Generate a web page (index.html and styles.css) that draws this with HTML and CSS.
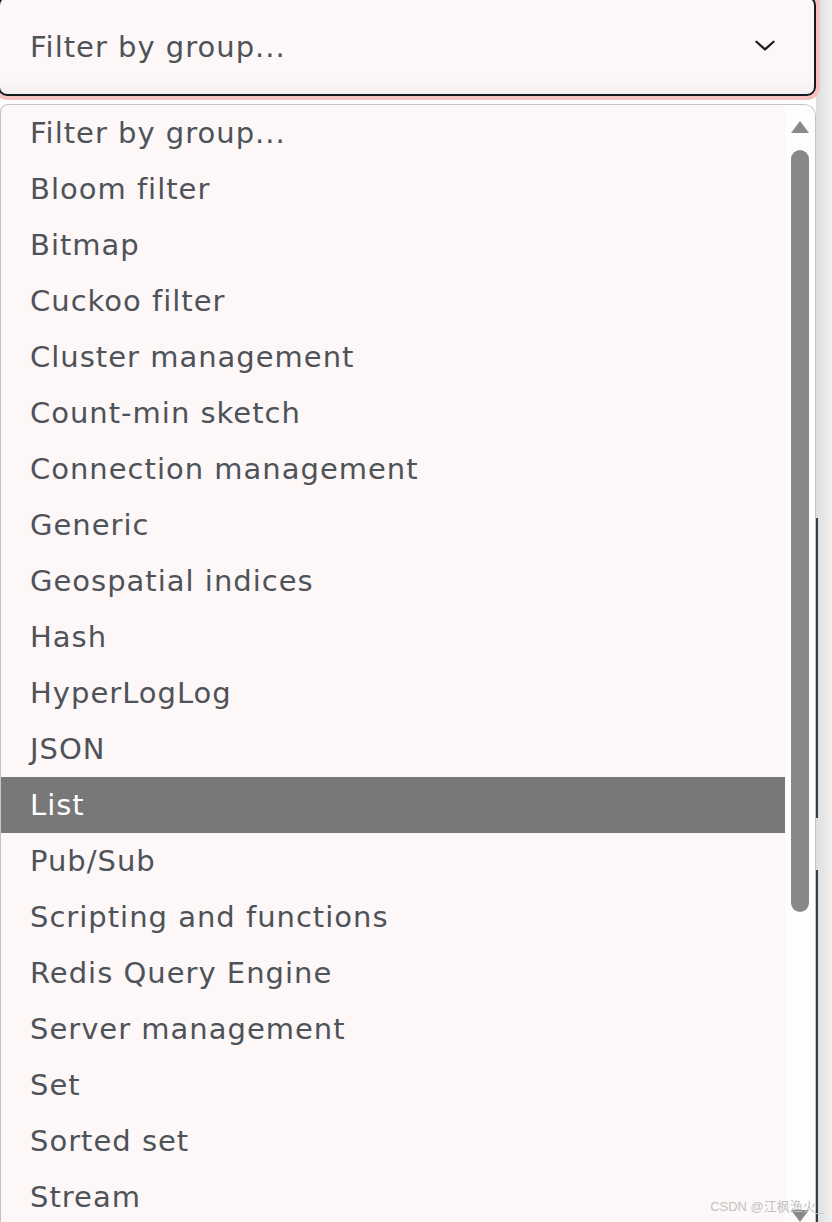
FILE: index.html
```html
<!DOCTYPE html>
<html lang="en">
<head>
  <meta charset="UTF-8">
  <meta name="viewport" content="width=device-width, initial-scale=1.0">
  <title>Filter by group</title>
  <link rel="stylesheet" href="styles.css">
</head>
<body>
  <div class="page">
    <div class="main">
      <div class="select">
        <span class="select-text">Filter by group...</span>
        <svg class="chevron" viewBox="0 0 24 14" width="22" height="12">
          <path d="M2 2 L12 11 L22 2" fill="none" stroke="#1a1a1a" stroke-width="2.6" stroke-linecap="round" stroke-linejoin="round"/>
        </svg>
      </div>

      <div class="dropdown">
        <ul class="options">
          <li>Filter by group...</li>
          <li>Bloom filter</li>
          <li>Bitmap</li>
          <li>Cuckoo filter</li>
          <li>Cluster management</li>
          <li>Count-min sketch</li>
          <li>Connection management</li>
          <li>Generic</li>
          <li>Geospatial indices</li>
          <li>Hash</li>
          <li>HyperLogLog</li>
          <li>JSON</li>
          <li class="selected">List</li>
          <li>Pub/Sub</li>
          <li>Scripting and functions</li>
          <li>Redis Query Engine</li>
          <li>Server management</li>
          <li>Set</li>
          <li>Sorted set</li>
          <li>Stream</li>
        </ul>
        <div class="scrollbar">
          <span class="arrow up"></span>
          <span class="thumb"></span>
          <span class="arrow down"></span>
        </div>
      </div>
    </div>
    <div class="side">
      <span class="side-line top"></span>
      <span class="side-line bottom"></span>
    </div>
  </div>
  <span class="watermark">CSDN @江枫渔火_</span>
</body>
</html>
```

FILE: styles.css
```css
:root{
  --bg-color:#fdf7f7;
  --text-color:#4d5359;
  --border-color:#c4c4c4;
  --thumb-color:#888888;
  --selected-color:#787878;
}
*{
  margin:0;
  padding:0;
  box-sizing:border-box;
}
body{
  width:832px;
  height:1222px;
  overflow:hidden;
  background:#ffffff;
  font-family:"DejaVu Sans","Noto Sans",sans-serif;
  position:relative;
}
.page{
  display:flex;
  height:100%;
}
.main{
  width:816px;
  flex-shrink:0;
}
.select{
  position:relative;
  z-index:1;
  margin-top:-4px;
  margin-left:-2px;
  height:100px;
  display:flex;
  align-items:center;
  justify-content:space-between;
  padding:0 38px 0 30px;
  background:linear-gradient(to bottom,var(--bg-color) 80%,#f6f0f0);
  border:2px solid #15181c;
  border-radius:9px;
  box-shadow:0 0 0 4px #f5c0c0;
  color:var(--text-color);
  font-size:29px;
  letter-spacing:1px;
}
.select-text{
  padding-top:2px;
}
.chevron{
  display:block;
}
.dropdown{
  margin-top:8px;
  height:1130px;
  display:flex;
  background:var(--bg-color);
  border:1px solid var(--border-color);
  border-bottom:none;
  border-radius:8px 12px 0 0;
  overflow:hidden;
}
.options{
  list-style:none;
  flex:1;
}
.options li{
  height:56px;
  line-height:56px;
  padding-left:29px;
  color:var(--text-color);
  font-size:29px;
  letter-spacing:1px;
}
.options .selected{
  background:var(--selected-color);
  color:#ffffff;
}
.scrollbar{
  width:30px;
  background:#fdfdfd;
  position:relative;
}
.arrow{
  position:absolute;
  left:6px;
  width:0;
  height:0;
  border-left:9px solid transparent;
  border-right:9px solid transparent;
}
.arrow.up{
  top:16px;
  border-bottom:12px solid var(--thumb-color);
}
.arrow.down{
  bottom:12px;
  border-top:12px solid var(--thumb-color);
}
.thumb{
  position:absolute;
  left:6px;
  top:45px;
  width:18px;
  height:762px;
  border-radius:9px;
  background:var(--thumb-color);
}
.side{
  flex:1;
  position:relative;
  background:linear-gradient(to right,#dedede,#f0f0f0);
}
.side-line{
  position:absolute;
  left:0;
  width:2px;
  background:#2f3e48;
}
.side-line.top{
  top:518px;
  height:300px;
}
.side-line.bottom{
  top:870px;
  bottom:0;
}
.watermark{
  position:absolute;
  right:9px;
  bottom:7px;
  font-family:"Liberation Sans","Noto Sans CJK SC",sans-serif;
  font-size:13px;
  color:#c2c2c2;
}
```
